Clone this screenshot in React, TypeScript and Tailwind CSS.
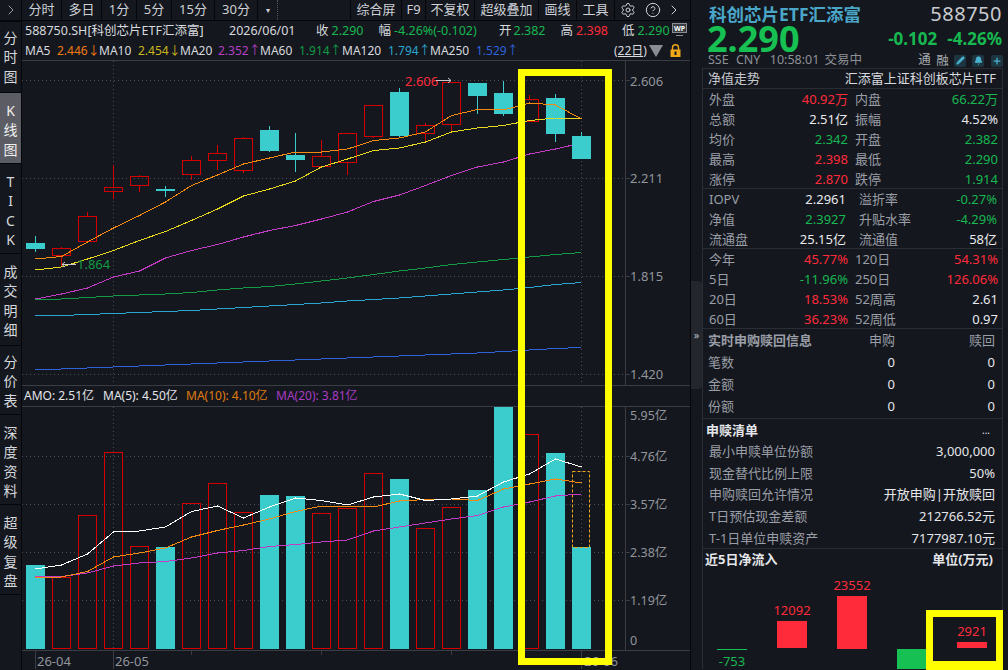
import { ChevronRight, CircleHelp, Settings, Pencil, Bell, Plus } from 'lucide-react'

const RED = '#d40000'
const CYAN = '#3bcdcd'

const sideTabs = [
  { chars: ['分', '时', '图'], h: 'h-[71px] pt-[6px]', cls: 'text-[#d5d8dc]' },
  { chars: ['K', '线', '图'], h: 'h-[71px] pt-[8px]', cls: 'bg-[#5c5c64] text-[#f0f0f0]' },
  { chars: ['T', 'I', 'C', 'K'], h: 'h-[90px] pt-[8px]', cls: 'text-[#d5d8dc]' },
  { chars: ['成', '交', '明', '细'], h: 'h-[92px] pt-[8px]', cls: 'text-[#d5d8dc]' },
  { chars: ['分', '价', '表'], h: 'h-[69px] pt-[6px]', cls: 'text-[#d5d8dc]' },
  { chars: ['深', '度', '资', '料'], h: 'h-[90px] pt-[8px]', cls: 'text-[#d5d8dc]' },
  { chars: ['超', '级', '复', '盘'], h: 'h-[90px] pt-[8px]', cls: 'text-[#d5d8dc]' },
]

const toolLeft = [
  { t: '分时', w: 'w-[40px]' },
  { t: '多日', w: 'w-[40px]' },
  { t: '1分', w: 'w-[35px]' },
  { t: '5分', w: 'w-[35px]' },
  { t: '15分', w: 'w-[43px]' },
  { t: '30分', w: 'w-[43px]' },
]

const toolRight = [
  { t: '综合屏', w: 'w-[51px]' },
  { t: 'F9', w: 'w-[24px]' },
  { t: '不复权', w: 'w-[49px]' },
  { t: '超级叠加', w: 'w-[64px]' },
  { t: '画线', w: 'w-[38px]' },
  { t: '工具', w: 'w-[38px]' },
]

// top, bottom, wick top, wick bottom
const candles: [string, number, number, number, number][] = [
  ['c', 244, 250, 237, 253],
  ['r', 249.5, 256.5, 248, 267],
  ['r', 217.5, 242.5, 213, 243],
  ['r', 188.5, 192.5, 166, 200],
  ['r', 177.5, 186.5, 176, 193],
  ['c', 190, 192, 187, 198],
  ['r', 161.5, 175.5, 157, 181],
  ['r', 154.5, 161.5, 146, 171],
  ['r', 139.5, 171.5, 138, 174],
  ['c', 131, 152, 127, 153],
  ['c', 156, 161, 134, 173],
  ['r', 157.5, 167.5, 141, 168],
  ['r', 134.5, 163.5, 134, 176],
  ['r', 106.5, 137.5, 106, 139],
  ['c', 93, 137, 89, 139],
  ['r', 126.5, 134.5, 124, 143],
  ['r', 83.5, 125.5, 83, 133],
  ['c', 84, 97, 84, 115],
  ['c', 94, 115, 82, 117],
  ['r', 100.5, 122.5, 96, 123],
  ['c', 99, 135, 95, 143],
  ['c', 137, 160, 133, 160],
]

const volumes: [string, number][] = [
  ['c', 566], ['r', 578.5], ['r', 516.5], ['r', 453.5], ['r', 547.5], ['c', 548], ['r', 504.5], ['r', 484.5],
  ['r', 513.5], ['c', 496], ['c', 497], ['r', 514.5], ['r', 509.5], ['r', 474.5], ['c', 480], ['r', 529.5],
  ['r', 508.5], ['c', 491], ['c', 408], ['r', 435.5], ['c', 454], ['c', 548],
]

const ma5 = [260, 257.5, 243, 229, 216.5, 203, 186.5, 176, 165, 159, 153, 153, 150, 141.5, 139, 133, 116.5, 110.5, 111, 104, 106, 120]
const ma10 = [271, 268, 260, 251.5, 241.5, 232.5, 221.5, 210, 197, 190, 182, 168, 160, 151.5, 149, 143, 133, 129, 126.5, 121.5, 119, 119]
const ma20 = [300, 295, 289, 278, 272, 259, 251.5, 245.5, 238, 231.5, 226.5, 220, 213, 202.5, 196, 186.5, 176.5, 168, 163, 155, 150, 144]
const ma60 = [301, 300, 298.5, 297, 296, 295, 293.5, 291, 289, 287.5, 285, 282, 279, 275.5, 272, 269, 265.5, 263, 260.5, 258, 255.5, 253.5]
const ma120 = [317, 316.5, 315.5, 314.5, 313.5, 312.5, 311.5, 310, 308.5, 307, 305.5, 304, 302, 300.5, 299, 297, 295, 293, 291, 288.5, 285.5, 283.5]
const ma250 = [371, 370, 369, 368, 367, 366, 365, 364, 363, 362, 361, 360, 359, 358, 357, 356, 355, 354, 352.5, 351, 349.5, 348.5]

const vol5 = [570, 566, 555, 533, 532, 528, 512.5, 507, 519, 508, 499, 501.5, 506, 498, 495, 501.5, 500, 497, 483, 475, 460, 468]
const vol10 = [579, 578, 572.5, 558, 554, 549, 538, 531.5, 526, 520, 512.5, 507, 507, 508, 502, 500.5, 500, 501.5, 490, 485, 480, 484]
const vol20 = [578, 577.5, 574, 567, 564, 562.5, 559, 554, 551.5, 547.5, 545.5, 543, 541, 532, 528, 524, 520, 516.5, 508, 503, 497, 495]

const pts = (ys: number[]) => ys.map((y, i) => `${35.5 + 26 * i},${y}`).join(' ')

function MaLine({ ys, color }: { ys: number[]; color: string }) {
  return <polyline points={pts(ys)} fill="none" stroke={color} strokeWidth="1" shapeRendering="crispEdges" />
}

function Row({ label, value, valueCls, left = 'w-[139px]', right = 'ml-[7px] w-[143px]', label2, value2, value2Cls }: {
  label: string
  value: string
  valueCls: string
  left?: string
  right?: string
  label2: string
  value2: string
  value2Cls: string
}) {
  return (
    <div className="flex h-[20px] items-center whitespace-nowrap pl-[6px] text-[13px] leading-none">
      <div className={`flex justify-between ${left}`}>
        <span className="text-[#9a9ea6]">{label}</span>
        <span className={valueCls}>{value}</span>
      </div>
      <div className={`flex justify-between ${right}`}>
        <span className="text-[#9a9ea6]">{label2}</span>
        <span className={value2Cls}>{value2}</span>
      </div>
    </div>
  )
}

function Subscribe({ label, a, b }: { label: string; a: string; b: string }) {
  return (
    <div className="flex h-[22px] items-center pl-[5px] pr-[7px] text-[13px] leading-none">
      <span className="grow text-[#9a9ea6]">{label}</span>
      <span className="w-[40px] text-right text-[#e4e6e9]">{a}</span>
      <span className="w-[100px] text-right text-[#e4e6e9]">{b}</span>
    </div>
  )
}

function ListRow({ label, value }: { label: string; value: string }) {
  return (
    <div className="flex h-[21.6px] items-center justify-between pl-[6px] pr-[7px] text-[13px] leading-none">
      <span className="text-[#9a9ea6]">{label}</span>
      <span className="text-[#e4e6e9]">{value}</span>
    </div>
  )
}

const G = 'text-[#17b850]'
const R = 'text-[#ff2b3a]'
const W = 'text-[#e8eaed]'

export default function App() {
  return (
    <div className="relative flex h-[670px] w-[1008px] overflow-hidden bg-[#14171e] text-[13px] text-[#d5d8dc] [font-family:'Noto_Sans','Noto_Sans_CJK_SC',sans-serif]">
      {/* left tabs */}
      <aside className="w-[22px] shrink-0 border-r border-[#05060a]">
        <div className="flex h-[22px] items-center justify-center border-b-2 border-[#05060a] text-[#9a9ea6]">
          <ChevronRight className="h-[16px] w-[16px]" strokeWidth={1.5} />
        </div>
        {sideTabs.map((tab, i) => (
          <div key={i} className={`flex flex-col items-center border-b border-[#05060a] text-[14px] leading-[19.3px] ${tab.h} ${tab.cls}`}>
            {tab.chars.map((c, j) => (
              <span key={j}>{c}</span>
            ))}
          </div>
        ))}
      </aside>

      {/* chart column */}
      <main className="w-[668px] shrink-0">
        <div className="flex h-[21px] items-center border-b border-[#05060a] text-[#ced1d6]">
          {toolLeft.map((b) => (
            <div key={b.t} className={`flex h-full shrink-0 items-center justify-center border-r border-[#05060a] ${b.w}`}>{b.t}</div>
          ))}
          <div className="flex h-full w-[20px] shrink-0 items-center justify-center border-r border-dotted border-[#555] text-[8px]">▾</div>
          <div className="w-[72px] shrink-0" />
          {toolRight.map((b) => (
            <div key={b.t} className={`flex h-full shrink-0 items-center justify-center border-l border-[#05060a] ${b.w}`}>{b.t}</div>
          ))}
          <div className="flex h-full w-[26px] shrink-0 items-center justify-center border-l border-[#05060a]">
            <Settings className="h-[16px] w-[16px]" strokeWidth={1.5} />
          </div>
          <div className="flex h-full w-[26px] shrink-0 items-center justify-center">
            <CircleHelp className="h-[16px] w-[16px]" strokeWidth={1.5} />
          </div>
          <ChevronRight className="h-[16px] w-[16px] shrink-0" strokeWidth={1.5} />
        </div>

        <div className="flex h-[20px] items-center whitespace-nowrap pl-[3px] text-[12.5px] leading-none">
          <span className="w-[204px] text-[#d8dade]">588750.SH[科创芯片ETF汇添富]</span>
          <span className="w-[87px] text-[#d8dade]">2026/06/01</span>
          <span className="mr-[3px]">收</span>
          <span className={`w-[47px] ${G}`}>2.290</span>
          <span className="mr-[3px]">幅</span>
          <span className={`w-[105px] ${G}`}>-4.26%(-0.102)</span>
          <span className="mr-[2px]">开</span>
          <span className={`w-[47px] ${G}`}>2.382</span>
          <span className="mr-[3px]">高</span>
          <span className={`w-[46px] ${R}`}>2.398</span>
          <span className="mr-[3px]">低</span>
          <span className={G}>2.290</span>
        </div>

        <div className="flex h-[20px] items-center whitespace-nowrap border-b border-[#3a3d43] pl-[3px] text-[12px] leading-none">
          <span className="w-[32px] text-[#d8dade]">MA5</span>
          <span className="w-[42px] text-[#f07a14]">2.446↓</span>
          <span className="w-[39px] text-[#d8dade]">MA10</span>
          <span className="w-[42px] text-[#c9b51c]">2.454↓</span>
          <span className="w-[38px] text-[#d8dade]">MA20</span>
          <span className="w-[42px] text-[#b23fc4]">2.352↑</span>
          <span className="w-[39px] text-[#d8dade]">MA60</span>
          <span className="w-[43px] text-[#129a45]">1.914↑</span>
          <span className="w-[46px] text-[#d8dade]">MA120</span>
          <span className="w-[42px] text-[#2aa5d0]">1.794↑</span>
          <span className="w-[46px] text-[#d8dade]">MA250</span>
          <span className="w-[138px] text-[#2f62dc]">1.529↑</span>
          <span className="w-[35px] text-[#d8dade] underline">(22日)</span>
          <span className="h-0 w-0 border-x-[7px] border-t-[12px] border-x-transparent border-t-[#8a8d92]" />
          <svg viewBox="0 0 11 13" className="ml-[7px] h-[13px] w-[11px]">
            <path d="M2.5 6V3.8a3 3 0 0 1 6 0V6" fill="none" stroke="#f0a818" strokeWidth="1.4" />
            <rect x="0.5" y="5.5" width="10" height="7.5" fill="#f0a818" />
            <rect x="4.5" y="7.5" width="2" height="3.5" fill="#14171e" />
          </svg>
        </div>

        {/* price pane */}
        <svg viewBox="22 62 668 324" className="block h-[324px] w-[668px]">
          {[81.5, 179.5, 277.5, 375.5].map((y) => (
            <line key={y} x1="22" x2="625" y1={y} y2={y} stroke="#4b4e54" strokeDasharray="1 3" />
          ))}
          <line x1="113.5" x2="113.5" y1="62" y2="386" stroke="#4b4e54" strokeDasharray="1 3" />
          <line x1="581.5" x2="581.5" y1="62" y2="386" stroke="#4b4e54" strokeDasharray="1 3" />
          <line x1="625.5" x2="625.5" y1="62" y2="386" stroke="#3a3d43" />
          {[81.5, 179.5, 277.5, 375.5].map((y) => (
            <line key={y} x1="625" x2="630" y1={y} y2={y} stroke="#3a3d43" />
          ))}
          {['2.606', '2.211', '1.815', '1.420'].map((t, i) => (
            <text key={t} x="630" y={[87, 184, 282, 380][i]} fontSize="13" fill="#92959b">{t}</text>
          ))}
          <MaLine ys={ma250} color="#2f62dc" />
          <MaLine ys={ma120} color="#2aa5d0" />
          <MaLine ys={ma60} color="#129a45" />
          <MaLine ys={ma20} color="#c43cc4" />
          {candles.map(([type, top, bottom, wt, wb], i) => {
            const x = 35.5 + 26 * i
            if (type === 'c') {
              return (
                <g key={i}>
                  <line x1={x} x2={x} y1={wt} y2={wb} stroke={CYAN} />
                  <rect x={x - 9.5} y={top} width="19" height={bottom - top} fill={CYAN} />
                </g>
              )
            }
            return (
              <g key={i} stroke={RED} fill="none">
                <line x1={x} x2={x} y1={wt} y2={top} />
                <line x1={x} x2={x} y1={bottom} y2={wb} />
                <rect x={x - 9} y={top} width="18" height={bottom - top} />
              </g>
            )
          })}
          <MaLine ys={ma10} color="#e8d820" />
          <MaLine ys={ma5} color="#f58a10" />
          <text x="405" y="87" fontSize="13" fill="#ff2b3a">2.606</text>
          <path d="M436 81.5H451M448 79l3 2.5-3 2.5" stroke="#c8c8c8" fill="none" />
          <path d="M76 265.5H62M65 263l-3 2.5 3 2.5" stroke="#c8c8c8" fill="none" />
          <text x="77" y="270" fontSize="13" fill="#129a45">1.864</text>
        </svg>

        {/* volume legend */}
        <div className="flex h-[22px] items-center whitespace-nowrap border-y border-[#3a3d43] pl-[2px] text-[12px] leading-none">
          <span className="w-[79px] text-[#e4e6e9]">AMO: 2.51亿</span>
          <span className="w-[83px] text-[#e4e6e9]">MA(5): 4.50亿</span>
          <span className="w-[90px] text-[#e07c10]">MA(10): 4.10亿</span>
          <span className="text-[#a93cc4]">MA(20): 3.81亿</span>
        </div>

        {/* volume pane */}
        <svg viewBox="22 408 668 262" className="block h-[262px] w-[668px]">
          {[457.5, 505.5, 553.5, 601.5].map((y) => (
            <line key={y} x1="22" x2="625" y1={y} y2={y} stroke="#4b4e54" strokeDasharray="1 3" />
          ))}
          <line x1="113.5" x2="113.5" y1="408" y2="651" stroke="#4b4e54" strokeDasharray="1 3" />
          <line x1="581.5" x2="581.5" y1="408" y2="651" stroke="#4b4e54" strokeDasharray="1 3" />
          <line x1="625.5" x2="625.5" y1="408" y2="651" stroke="#3a3d43" />
          <line x1="22" x2="690" y1="651.5" y2="651.5" stroke="#3a3d43" />
          {[457.5, 505.5, 553.5, 601.5].map((y) => (
            <line key={y} x1="625" x2="630" y1={y} y2={y} stroke="#3a3d43" />
          ))}
          {volumes.map(([type, top], i) => {
            const x = 35.5 + 26 * i
            return type === 'c' ? (
              <rect key={i} x={x - 9.5} y={top} width="19" height={650 - top} fill={CYAN} />
            ) : (
              <rect key={i} x={x - 9} y={top} width="18" height={649.5 - top} fill="none" stroke={RED} />
            )
          })}
          <rect x="572.5" y="472.5" width="17" height="76" fill="none" stroke="#f0a818" strokeDasharray="3 2" />
          <MaLine ys={vol20} color="#c43cc4" />
          <MaLine ys={vol10} color="#f58a10" />
          <MaLine ys={vol5} color="#ffffff" />
          {[
            ['5.95亿', 421],
            ['4.76亿', 462],
            ['3.57亿', 510],
            ['2.38亿', 558],
            ['1.19亿', 606],
            ['0', 646],
          ].map(([t, y]) => (
            <text key={t} x="630" y={y} fontSize="12.5" fill="#92959b">{t}</text>
          ))}
          {[35.5, 113.5, 581.5].map((x) => (
            <line key={x} x1={x} x2={x} y1="651" y2="670" stroke="#3a3d43" />
          ))}
          {[191.5, 321.5, 451.5].map((x) => (
            <line key={x} x1={x} x2={x} y1="651" y2="656" stroke="#3a3d43" />
          ))}
          <text x="37" y="667" fontSize="13" fill="#92959b">26-04</text>
          <text x="115" y="667" fontSize="13" fill="#92959b">26-05</text>
          <text x="584" y="667" fontSize="13" fill="#92959b">26-06</text>
        </svg>
      </main>

      {/* collapse handle */}
      <div className="flex w-[12px] shrink-0 items-center border-l border-[#05060a]">
        <div className="flex h-[108px] w-[11px] items-center justify-center rounded-r-sm bg-[#23262c] text-[11px] text-[#b8bbc0]">»</div>
      </div>

      {/* quote panel */}
      <section className="w-[301px] shrink-0 whitespace-nowrap">
        <div className="relative -ml-[1px] h-[68px]">
          <div className="flex h-[27px] items-center justify-between pl-[8px] pr-[1px]">
            <span className="text-[17.5px] font-bold leading-[22px] text-[#4aa6c8]">科创芯片ETF汇添富</span>
            <span className="text-[20px] leading-[22px] tracking-[0.5px] text-[#c8cacd]">588750</span>
          </div>
          <div className="flex h-[23px] items-center justify-between pl-[6px] pr-[1px]">
            <span className="text-[36px] font-bold leading-[23px] text-[#17c052]">2.290</span>
            <span className={`text-[17px] font-bold leading-none ${G}`}>
              -0.102<span className="ml-[10px]">-4.26%</span>
            </span>
          </div>
          <div className="mt-[3px] flex h-[15px] items-center pl-[7px] text-[12.5px] leading-none text-[#8e9197]">
            <span className="w-[28px]">SSE</span>
            <span className="w-[34px]">CNY</span>
            <span className="w-[55px]">10:58:01</span>
            <span className="w-[94px]">交易中</span>
            <span className="w-[18px] text-[#a8abb0]">通</span>
            <span className="w-[18px] translate-y-[1px] text-[#a8abb0]">融</span>
            <span className="flex h-[12px] w-[12px] items-center justify-center rounded-[2px] bg-[#1d3540] text-[#49b4cf]">
              <Pencil className="h-[9px] w-[9px]" fill="#49b4cf" />
            </span>
            <span className="ml-[6px] flex h-[12px] w-[12px] items-center justify-center rounded-[2px] bg-[#1d3540] text-[#49b4cf]">
              <Bell className="h-[9px] w-[9px]" fill="#49b4cf" />
            </span>
            <span className="ml-[7px] flex h-[12px] w-[12px] items-center justify-center rounded-[2px] bg-[#1d3540] text-[#49b4cf]">
              <Plus className="h-[10px] w-[10px]" strokeWidth={3} />
            </span>
          </div>
        </div>

        <div className="border-x border-t border-[#2a2d33]">
          <div className="flex h-[20px] items-center justify-between border-b border-[#2a2d33] pl-[5px] pr-[6px] text-[13px] leading-none">
            <span className="text-[#c4c7cc]">净值走势</span>
            <span className="text-[#d8dade]">汇添富上证科创板芯片ETF</span>
          </div>

          <div className="h-[100px] border-b border-[#2a2d33]">
            <Row label="外盘" value="40.92万" valueCls={R} label2="内盘" value2="66.22万" value2Cls={G} />
            <Row label="总额" value="2.51亿" valueCls={W} label2="振幅" value2="4.52%" value2Cls={W} />
            <Row label="均价" value="2.342" valueCls={G} label2="开盘" value2="2.382" value2Cls={G} />
            <Row label="最高" value="2.398" valueCls={R} label2="最低" value2="2.290" value2Cls={G} />
            <Row label="涨停" value="2.870" valueCls={R} label2="跌停" value2="1.914" value2Cls={G} />
          </div>

          <div className="h-[60px] border-b border-[#2a2d33]">
            <Row label="IOPV" value="2.2961" valueCls={W} left="w-[137px]" right="ml-[13px] w-[138px]" label2="溢折率" value2="-0.27%" value2Cls={G} />
            <Row label="净值" value="2.3927" valueCls={G} left="w-[137px]" right="ml-[13px] w-[138px]" label2="升贴水率" value2="-4.29%" value2Cls={G} />
            <Row label="流通盘" value="25.15亿" valueCls={W} left="w-[137px]" right="ml-[13px] w-[138px]" label2="流通值" value2="58亿" value2Cls={W} />
          </div>

          <div className="h-[80px] border-b border-[#2a2d33]">
            <Row label="今年" value="45.77%" valueCls={R} label2="120日" value2="54.31%" value2Cls={R} />
            <Row label="5日" value="-11.96%" valueCls={G} label2="250日" value2="126.06%" value2Cls={R} />
            <Row label="20日" value="18.53%" valueCls={R} label2="52周高" value2="2.61" value2Cls={W} />
            <Row label="60日" value="36.23%" valueCls={R} label2="52周低" value2="0.97" value2Cls={W} />
          </div>

          <div className="h-[90px] border-b border-[#2a2d33]">
            <div className="flex h-[22px] items-center pl-[5px] pr-[7px] text-[13px] leading-none text-[#9a9ea6]">
              <span className="grow font-bold">实时申购赎回信息</span>
              <span className="w-[40px] text-right">申购</span>
              <span className="w-[100px] text-right">赎回</span>
            </div>
            <Subscribe label="笔数" a="0" b="0" />
            <Subscribe label="金额" a="0" b="0" />
            <Subscribe label="份额" a="0" b="0" />
          </div>

          <div className="h-[130px] border-b border-[#2a2d33]">
            <div className="flex h-[22px] items-center justify-between pl-[3px] pr-[12px] text-[13px] font-bold leading-none text-[#e4e6e9]">
              <span>申赎清单</span>
              <span className="text-[10px] font-normal">...</span>
            </div>
            <ListRow label="最小申赎单位份额" value="3,000,000" />
            <ListRow label="现金替代比例上限" value="50%" />
            <ListRow label="申购赎回允许情况" value="开放申购|开放赎回" />
            <ListRow label="T日预估现金差额" value="212766.52元" />
            <ListRow label="T-1日单位申赎资产" value="7177987.10元" />
          </div>

          <div className="flex h-[21px] items-center justify-between pl-[2px] pr-[9px] text-[13px] font-bold leading-none text-[#e4e6e9]">
            <span>近5日净流入</span>
            <span>单位(万元)</span>
          </div>
          <svg viewBox="703 571 299 99" className="block h-[99px] w-[299px]">
            <rect x="717" y="650" width="30" height="1" fill="#17c052" />
            <text x="732" y="667" fontSize="13" textAnchor="middle" fill="#17b850">-753</text>
            <rect x="777" y="622" width="30" height="27" fill="#ff2b3a" />
            <text x="792" y="616" fontSize="13" textAnchor="middle" fill="#ff2b3a">12092</text>
            <rect x="837" y="597" width="30" height="53" fill="#ff2b3a" />
            <text x="852" y="591" fontSize="13" textAnchor="middle" fill="#ff2b3a">23552</text>
            <rect x="897" y="650" width="30" height="20" fill="#17c052" />
            <rect x="957" y="643" width="30" height="6" fill="#ff2b3a" />
            <text x="972" y="637" fontSize="13" textAnchor="middle" fill="#ff2b3a">2921</text>
          </svg>
        </div>
      </section>

      {/* WP badge over the quote row */}
      <div className="absolute left-[672px] top-[23px] flex h-[10px] w-[15px] items-center justify-center border border-[#8a8d92] bg-[#3a3d43] text-[7px] font-bold leading-none text-white">WP</div>
      <div className="absolute left-[676px] top-[33px] h-[3px] w-[7px] border-b border-[#8a8d92]" />

      {/* hand-drawn yellow marks on top of the screenshot */}
      <div className="absolute left-[518px] top-[69px] h-[596px] w-[94px] border-[7px] border-[#ffff00]" />
      <div className="absolute left-[926px] top-[610px] h-[60px] w-[77px] border-[7px] border-b-[9px] border-[#ffff00]" />
    </div>
  )
}
